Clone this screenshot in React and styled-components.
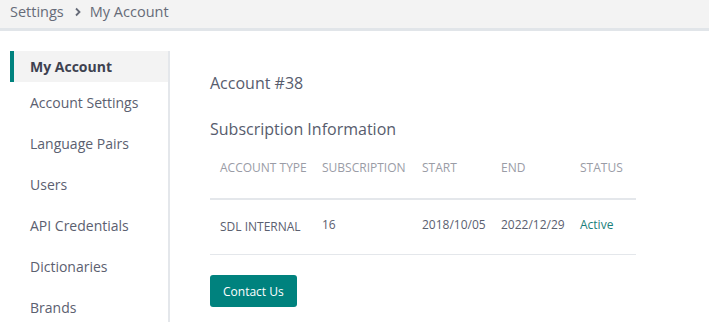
import styled, { createGlobalStyle } from 'styled-components';

const GlobalStyle = createGlobalStyle`
  html, body {
    margin: 0;
    padding: 0;
    background: #fff;
  }
  body {
    font-family: 'Open Sans', 'Noto Sans', sans-serif;
    color: #5b6070;
  }
`;

const teal = '#00827e';

const menu = [
  'My Account',
  'Account Settings',
  'Language Pairs',
  'Users',
  'API Credentials',
  'Dictionaries',
  'Brands',
];

const columns = ['Account Type', 'Subscription', 'Start', 'End', 'Status'];
const widths = [102, 100, 79, 79, 56];

export default function App() {
  return (
    <>
      <GlobalStyle />
      <Page>
        <Breadcrumb>
          <Crumb>Settings</Crumb>
          <Chevron viewBox='0 0 8 10'>
            <path d='M2 1.5 L5.5 5 L2 8.5' />
          </Chevron>
          <Crumb>My Account</Crumb>
        </Breadcrumb>
        <Body>
          <Sidebar>
            {menu.map((item, i) => (
              <MenuItem key={item} active={i === 0}>
                {item}
              </MenuItem>
            ))}
          </Sidebar>
          <Main>
            <Title>Account #38</Title>
            <Subtitle>Subscription Information</Subtitle>
            <Table>
              <HeadRow>
                {columns.map((c, i) => (
                  <HeadCell key={c} style={{ width: widths[i] }}>
                    {c}
                  </HeadCell>
                ))}
              </HeadRow>
              <Row>
                <Cell style={{ width: widths[0] }} offset={2}>
                  SDL INTERNAL
                </Cell>
                <Cell style={{ width: widths[1] }}>16</Cell>
                <Cell style={{ width: widths[2] }}>2018/10/05</Cell>
                <Cell style={{ width: widths[3] }}>2022/12/29</Cell>
                <Cell style={{ width: widths[4] }} status>
                  Active
                </Cell>
              </Row>
            </Table>
            <Button>Contact Us</Button>
          </Main>
        </Body>
      </Page>
    </>
  );
}

const Page = styled.div`
  width: 709px;
  height: 322px;
  overflow: hidden;
`;

const Breadcrumb = styled.div`
  display: flex;
  align-items: center;
  box-sizing: border-box;
  height: 31px;
  padding: 0 10px 5px;
  background: #f3f3f3;
  border-bottom: 3px solid #e1e5e9;
`;

const Crumb = styled.span`
  font-size: 14.5px;
  color: #666b78;
`;

const Chevron = styled.svg`
  width: 8px;
  height: 10px;
  margin: 1px 8px 0 10px;
  fill: none;
  stroke: #666b78;
  stroke-width: 1.8;
`;

const Body = styled.div`
  display: flex;
  padding: 20px 0 0 10px;
`;

const Sidebar = styled.nav`
  display: flex;
  flex-direction: column;
  width: 158px;
  height: 280px;
  border-right: 2px solid #e4e7eb;
  flex-shrink: 0;
`;

const MenuItem = styled.div`
  display: flex;
  align-items: center;
  flex-shrink: 0;
  height: ${({ active }) => (active ? '31px' : '41px')};
  padding-left: ${({ active }) => (active ? '16px' : '20px')};
  border-left: ${({ active }) => (active ? `4px solid ${teal}` : 'none')};
  background: ${({ active }) => (active ? '#f3f3f3' : 'transparent')};
  font-size: 14px;
  font-weight: ${({ active }) => (active ? 700 : 400)};
  color: ${({ active }) => (active ? '#3e4250' : '#5b6070')};
`;

const Main = styled.main`
  padding: 20px 0 0 40px;
`;

const Title = styled.h1`
  margin: 0;
  font-size: 16px;
  font-weight: 400;
  line-height: 24px;
  color: #575c6d;
`;

const Subtitle = styled.h2`
  margin: 22px 0 0;
  font-size: 16px;
  font-weight: 400;
  line-height: 24px;
  color: #575c6d;
`;

const Table = styled.div`
  width: 426px;
  margin-top: 18px;
`;

const HeadRow = styled.div`
  display: flex;
  height: 39px;
  padding-left: 10px;
  border-bottom: 2px solid #e4e7eb;
`;

const HeadCell = styled.div`
  flex-shrink: 0;
  font-size: 12px;
  line-height: 18px;
  text-transform: uppercase;
  color: #9a9ca6;
`;

const Row = styled.div`
  display: flex;
  align-items: center;
  box-sizing: border-box;
  height: 55px;
  padding: 0 0 5px 10px;
  border-bottom: 1px solid #e4e7eb;
`;

const Cell = styled.div`
  flex-shrink: 0;
  font-size: 12px;
  color: ${({ status }) => (status ? '#1a7f7b' : '#5b6070')};
  margin-top: ${({ offset }) => (offset ? `${offset * 2}px` : '0')};
`;

const Button = styled.button`
  display: block;
  margin-top: 20px;
  height: 32px;
  padding: 0 13px;
  border: none;
  border-radius: 3px;
  background: ${teal};
  color: #fff;
  font-family: inherit;
  font-size: 12px;
`;
